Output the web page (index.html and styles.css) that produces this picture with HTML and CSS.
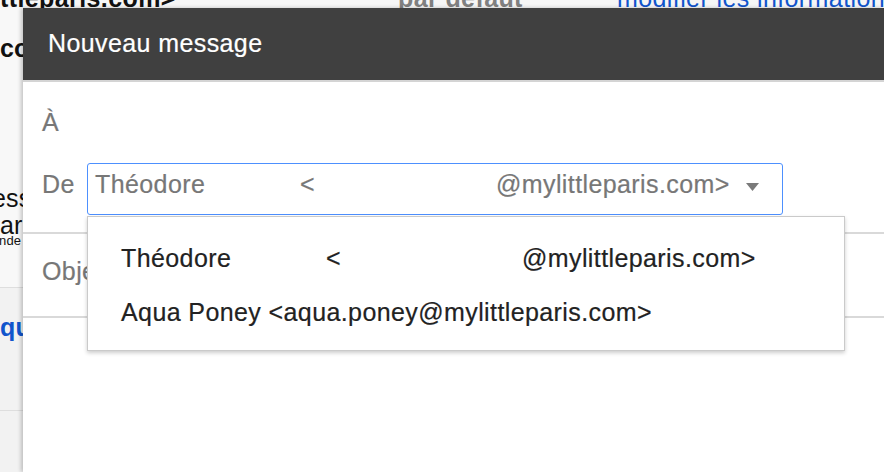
FILE: index.html
```html
<!DOCTYPE html>
<html lang="fr">
<head>
<meta charset="utf-8">
<title>Nouveau message</title>
<link rel="stylesheet" href="styles.css">
</head>
<body>
<div class="page">
  <div class="page-top">
    <div class="page-top-line">
      <span class="t-email">ttleparis.com&gt;</span>
      <span class="t-default">par défaut</span>
      <span class="t-link">modifier les informations</span>
    </div>
  </div>
  <div class="page-side">
    <div class="side-upper">
      <div class="s-co">co</div>
      <div class="s-ess">ess</div>
      <div class="s-ar">ar</div>
      <div class="s-nde">nde</div>
    </div>
    <div class="side-lower">
      <div class="s-qu">qu</div>
    </div>
    <div class="side-rest"></div>
  </div>
</div>

<div class="modal">
  <div class="modal-header">Nouveau message</div>
  <div class="modal-body">
    <div class="row-to">À</div>
    <div class="row-from">
      <span class="label-from">De</span>
      <div class="select">
        <span class="addr-name">Théodore</span>
        <span class="addr-lt">&lt;</span>
        <span class="addr-domain">@mylittleparis.com&gt;</span>
        <svg class="select-arrow" width="13" height="8" viewBox="0 0 13 8"><path d="M0 0H13L6.5 8Z" fill="#7a7a7a"/></svg>
      </div>
    </div>
    <div class="row-subject">Obje</div>
    <div class="dropdown">
      <div class="dd-item">
        <span class="addr-name">Théodore</span>
        <span class="addr-lt">&lt;</span>
        <span class="addr-domain">@mylittleparis.com&gt;</span>
      </div>
      <div class="dd-item">Aqua Poney &lt;aqua.poney@mylittleparis.com&gt;</div>
    </div>
  </div>
</div>
</body>
</html>
```

FILE: styles.css
```css
html, body {
  margin: 0;
  padding: 0;
  height: 100%;
}

body {
  background: #f2f2f2;
  font-family: "Liberation Sans", Arial, sans-serif;
  overflow: hidden;
  position: relative;
}

.page {
  display: flex;
  flex-direction: column;
  height: 100%;
}

.page-top {
  height: 8px;
  overflow: hidden;
  background: #f6f6f6;
}

.page-top-line {
  display: flex;
  white-space: nowrap;
  margin-top: -15px;
  font-size: 25px;
  line-height: 27px;
  letter-spacing: 0.4px;
}

.t-email {
  width: 398px;
  flex: none;
  font-weight: bold;
  color: #111;
}

.t-default {
  width: 219px;
  flex: none;
  font-weight: bold;
  color: #808080;
}

.t-link {
  color: #1155cc;
}

.page-side {
  width: 23px;
  flex: 1;
  display: flex;
  flex-direction: column;
  overflow: hidden;
  white-space: nowrap;
  font-size: 25px;
  letter-spacing: 0.2px;
  color: #111;
}

.side-upper {
  height: 279px;
  background: #f8f8f8;
  border-bottom: 1px solid #dedede;
}

.s-co {
  margin-top: 27px;
  line-height: 27px;
  font-weight: bold;
}

.s-ess {
  margin-top: 123px;
  margin-left: -8px;
  line-height: 26px;
}

.s-ar {
  margin-top: 4px;
  line-height: 20px;
}

.s-nde {
  font-size: 13px;
  letter-spacing: 0.2px;
  line-height: 12px;
  margin-left: -1px;
}

.side-lower {
  height: 122px;
  background: #f2f2f2;
  border-bottom: 1px solid #dedede;
}

.s-qu {
  margin-top: 26px;
  line-height: 27px;
  font-weight: bold;
  color: #1155cc;
}

.side-rest {
  flex: 1;
  background: #f2f2f2;
}

/* Dialog */
.modal {
  position: absolute;
  left: 23px;
  top: 8px;
  right: 0;
  bottom: 0;
  background: #fff;
  box-shadow: -2px 0 4px rgba(0, 0, 0, 0.22);
  font-size: 25px;
  letter-spacing: 0.4px;
  -webkit-text-stroke: 0.2px currentColor;
}

.modal-header {
  height: 72px;
  line-height: 70px;
  padding-left: 25px;
  background: #404040;
  color: #fff;
  border-bottom: 2px solid #d4d4d4;
}

.modal-body {
  position: relative;
  padding-top: 16px;
  color: #777;
}

.row-to {
  padding-left: 19px;
  line-height: 48px;
  height: 48px;
}

.row-from {
  display: flex;
  align-items: baseline;
  margin-top: 17px;
  padding-left: 19px;
  padding-bottom: 17px;
  border-bottom: 2px solid #d9d9d9;
}

.label-from {
  width: 45px;
  line-height: 27px;
}

.select {
  width: 696px;
  height: 52px;
  box-sizing: border-box;
  border: 1px solid #4d90fe;
  border-radius: 3px;
  padding: 7px 0 0 7px;
  display: flex;
  align-items: flex-start;
  line-height: 27px;
  white-space: nowrap;
}

.addr-name {
  width: 205px;
  flex: none;
}

.addr-lt {
  width: 196px;
  flex: none;
}

.select-arrow {
  margin-left: auto;
  margin-right: 23px;
  margin-top: 12px;
  flex: none;
}

.row-subject {
  padding: 24px 0 31px 19px;
  line-height: 27px;
  border-bottom: 2px solid #d9d9d9;
}

.dropdown {
  position: absolute;
  left: 64px;
  top: 134px;
  width: 758px;
  height: 135px;
  box-sizing: border-box;
  background: #fff;
  border: 1px solid #cacaca;
  box-shadow: 0 2px 4px rgba(0, 0, 0, 0.2);
  padding: 14px 0 11px 33px;
  color: #222;
}

.dd-item {
  display: flex;
  height: 54px;
  line-height: 54px;
  white-space: nowrap;
}
```
